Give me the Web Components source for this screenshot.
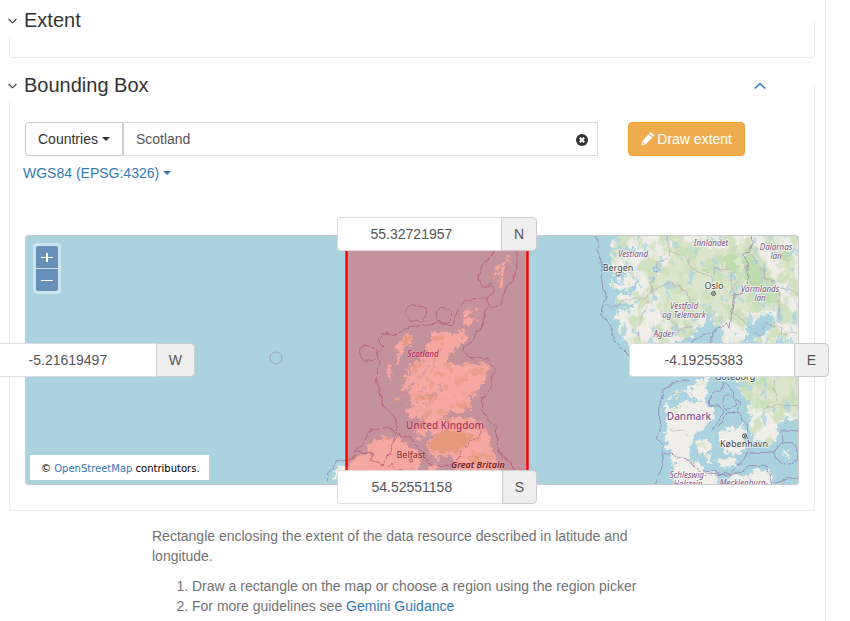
<!DOCTYPE html>
<html lang="en">
<head>
<meta charset="utf-8">
<title>Extent editor</title>
<style>
body { margin: 0; background: #fff; color: #333; font: 14px/20px "Liberation Sans", Arial, sans-serif; }
</style>
</head>
<body>
<extent-editor></extent-editor>

<template id="t-editor">
<style>
:host { display: block; box-sizing: border-box; min-height: 100vh; margin-right: 24px; padding: 21px 10px 0 9px; border-right: 1px solid #eee; }
.row { display: flex; gap: 30px; padding: 20px 54px 0 0; }
region-picker { flex: 1; }
.draw { display: flex; align-items: center; gap: 3px; height: 34px; padding: 0 12px; border: 1px solid #eea236; border-radius: 4px; background: #f0ad4e; color: #fff; font: inherit; }
.crs { display: flex; align-items: center; gap: 4px; margin: 7px 0 0 -2px; padding: 0; border: 0; background: none; color: #337ab7; font: inherit; }
.crs::after { content: ""; border: 4px solid transparent; border-top-color: currentColor; border-bottom: 0; }
extent-map { margin-top: 52px; }
.help { margin: 15px 165px 0 143px; color: #737373; }
p { margin: 0 0 10px; }
ol { margin: 0; padding-left: 40px; }
a { color: #337ab7; text-decoration: none; }
</style>
<form-section heading="Extent"></form-section>
<form-section heading="Bounding Box" collapsible>
  <div class="row">
    <region-picker></region-picker>
    <button class="draw" type="button">
      <svg width="13" height="14" viewBox="0 0 13 14" fill="currentColor" aria-hidden="true"><path d="M7.6 2.2 11.2 5.8 4.4 12.5 0.3 13.4l.9-4.2zM1.9 10.5l-.4 1.8 1.7-.4.2-.9-.6-.6z" fill-rule="evenodd"/><path d="M8.3 1.5 9.1.7q.8-.7 1.6 0l2 2q.7.8 0 1.600l-.8.8z"/></svg>
      Draw extent
    </button>
  </div>
  <button class="crs" type="button">WGS84 (EPSG:4326)</button>
  <extent-map></extent-map>
</form-section>
<div class="help">
  <p>Rectangle enclosing the extent of the data resource described in latitude and longitude.</p>
  <ol>
    <li>Draw a rectangle on the map or choose a region using the region picker</li>
    <li>For more guidelines see <a href="#guidance">Gemini Guidance</a></li>
  </ol>
</div>
</template>

<template id="t-section">
<style>
:host { display: flow-root; box-sizing: border-box; margin-bottom: 28px; padding: 0 15px 20px; border: 1px solid #eee; border-top: 0; border-radius: 0 0 4px 4px; }
:host([collapsible]) { margin-bottom: 0; padding-bottom: 25px; }
header { display: flex; align-items: center; height: 32px; margin: -16px 0 0 -18px; background: #fff; position: relative; }
h2 { flex: 1; margin: 0; padding-bottom: 2px; font-size: 20px; line-height: 30px; font-weight: 400; color: #333; }
button { display: flex; margin: 0; padding: 0; border: 0; background: none; color: #333; }
.fold { width: 17px; padding-left: 1px; }
.up { display: none; margin-right: 33px; color: #337ab7; }
:host([collapsible]) .up { display: flex; }
svg { fill: none; stroke: currentColor; }
</style>
<header>
  <button class="fold" type="button" aria-label="Toggle section"><svg width="9" height="8" viewBox="0 0 9 8" stroke-width="1.1"><path d="M.6 2 4.5 5.8 8.4 2"/></svg></button>
  <h2></h2>
  <button class="up" type="button" aria-label="Collapse"><svg width="12" height="10" viewBox="0 0 12 10" stroke-width="1.5"><path d="M.9 7.500 6 2.500 11.100 7.500"/></svg></button>
</header>
<slot></slot>
</template>

<template id="t-picker">
<style>
:host { display: flex; height: 34px; position: relative; }
button { font: inherit; color: #333; }
.kind { display: flex; align-items: center; gap: 4px; padding: 0 12px; border: 1px solid #ccc; border-radius: 4px 0 0 4px; background: #fff; }
.kind::after { content: ""; border: 4px solid transparent; border-top-color: currentColor; border-bottom: 0; }
input { flex: 1; min-width: 0; box-sizing: border-box; border: 1px solid #ddd; border-left-color: #ccc; padding: 0 36px 0 12px; font: inherit; color: #555; outline: 0; }
.clear { position: absolute; right: 10px; top: 12px; display: flex; padding: 0; border: 0; background: none; }
</style>
<button class="kind" type="button">Countries</button>
<input type="text" value="Scotland" aria-label="Region">
<button class="clear" type="button" aria-label="Clear"><svg width="12" height="12" viewBox="0 0 12 12"><circle cx="6" cy="6" r="6" fill="#333"/><path d="M3.8 3.8 8.2 8.2M8.2 3.8 3.8 8.2" stroke="#fff" stroke-width="2"/></svg></button>
</template>

<template id="t-coord">
<style>
:host { display: flex; box-sizing: border-box; width: 200px; height: 34px; }
input { flex: 1; min-width: 0; box-sizing: border-box; margin: 0; padding: 0 28px 0 12px; border: 1px solid #ddd; border-right: 0; border-radius: 4px 0 0 4px; background: #fff; color: #555; font: inherit; text-align: center; }
label { display: flex; align-items: center; padding: 0 12px; border: 1px solid #ccc; border-radius: 0 4px 4px 0; background: #eee; color: #555; }
</style>
<input id="v" type="text"><label for="v"></label>
</template>

<template id="t-map">
<style>
:host { display: block; position: relative; height: 250px; }
.view { box-sizing: border-box; height: 100%; border-radius: 4px; overflow: hidden; background: #abd2df; }
.view > svg { display: block; width: 100%; height: 100%; }
filter { color-interpolation-filters: sRGB; }
.frame { position: absolute; inset: 0; border: 1px solid #ccc; border-radius: 4px; pointer-events: none; }
.zoom { position: absolute; left: 8px; top: 8px; display: grid; gap: 1px; padding: 3px; border-radius: 4px; background: rgba(255,255,255,.4); }
.zoom button { width: 22px; height: 22px; padding: 5px; border: 0; background: #668fba; display: flex; }
.zoom button:first-child { border-radius: 2px 2px 0 0; }
.zoom button:last-child { border-radius: 0 0 2px 2px; }
.credit { position: absolute; left: 5px; bottom: 5px; height: 25px; box-sizing: border-box; padding: 0 9px 0 11px; background: #fff; color: #000; font: 10px/27px "DejaVu Sans", Verdana, sans-serif; }
.credit a { color: #337ab7; text-decoration: none; }
coord-field { position: absolute; }
.n { top: -18px; left: calc(50% - 75px); }
.s { bottom: -19px; left: calc(50% - 75px); }
.w { top: 108px; left: -30px; }
.e { top: 108px; right: -30px; }
text { font-family: "Noto Sans", sans-serif; text-anchor: middle; paint-order: stroke; stroke: rgba(255,255,255,.6); stroke-width: 2px; stroke-linejoin: round; }
.reg { font-size: 8px; font-style: italic; fill: #7f5486; }
.cty { font-size: 9px; fill: #444; }
.cap { font-size: 9px; fill: #444; }
.nat { font-size: 10px; font-weight: 500; fill: #84508a; }
.over { stroke: rgba(255,255,255,.25); }
.sea { fill: none; stroke: #8d78aa; stroke-width: 3; stroke-linejoin: round; opacity: .75; }
.adm { fill: none; stroke: #a184ab; stroke-width: 2; opacity: .65; }
</style>
<div class="view">
<svg viewBox="25 235 774 250" preserveAspectRatio="xMidYMid slice" role="img" aria-label="Map of Scotland and southern Scandinavia">
<defs>
  <filter id="rough" x="-5%" y="-5%" width="110%" height="110%"><feTurbulence type="fractalNoise" baseFrequency=".06" numOctaves="4" seed="4"/><feDisplacementMap in="SourceGraphic" scale="40" xChannelSelector="R" yChannelSelector="G"/></filter>
  <filter id="wob" x="-5%" y="-5%" width="110%" height="110%"><feTurbulence type="fractalNoise" baseFrequency=".035" numOctaves="2" seed="9"/><feDisplacementMap in="SourceGraphic" scale="22" xChannelSelector="R" yChannelSelector="G"/></filter>
  <filter id="woods" x="0" y="0" width="100%" height="100%"><feTurbulence type="fractalNoise" baseFrequency=".025 .02" numOctaves="5" seed="12"/><feColorMatrix values="0 0 0 0 .79  0 0 0 0 .87  0 0 0 0 .72  6 0 0 0 -2.7"/><feComposite in2="SourceGraphic" operator="in"/></filter>
  <filter id="lakes" x="0" y="0" width="100%" height="100%"><feTurbulence type="fractalNoise" baseFrequency=".045 .03" numOctaves="4" seed="31"/><feColorMatrix values="0 0 0 0 .68  0 0 0 0 .83  0 0 0 0 .88  12 0 0 0 -7.5"/><feComposite in2="SourceGraphic" operator="in"/></filter>
  <filter id="moor" x="0" y="0" width="100%" height="100%"><feTurbulence type="fractalNoise" baseFrequency=".04" numOctaves="4" seed="5"/><feColorMatrix values="0 0 0 0 .85  0 0 0 0 .86  0 0 0 0 .68  10 0 0 0 -5.6"/><feComposite in2="SourceGraphic" operator="in"/></filter>
  <path id="scan" d="M75 20 62 60 66 95 58 125 72 150 62 180 80 200 75 225 88 250 77 280 97 292 90 320 105 345 130 375 210 380 260 352 300 335 330 310 345 290 354 236 363 236 370 290 390 310 395 352 410 420 440 460 450 480 455 510 478 525 475 560 490 575 475 585 480 615 495 645 530 663 560 645 558 610 570 585 670 585 670 0 75 0z"/>
  <path id="alba" d="M335 362 350 370 365 362 385 372 400 372 440 362 438 385 425 405 400 425 385 445 378 458 410 465 450 458 495 458 505 470 500 495 485 525 465 550 450 570 457 590 425 605 400 610 370 618 350 625 420 622 455 625 485 635 505 670 515 710 530 750 540 790 400 790 405 750 380 735 350 750 325 722 320 700 340 680 330 655 310 685 295 680 292 655 300 630 270 620 275 590 265 550 283 520 255 510 280 490 265 470 290 460 325 430 315 420 330 390z"/>
</defs>
<g transform="translate(590 225) scale(.33333)">
  <g filter="url(#rough)"><use href="#scan" fill="#f0eee8"/></g>
  <g filter="url(#rough)" fill="#cfe2bd" opacity=".6">
    <path d="M245 30 320 60 400 70 480 40 520 100 570 210 560 260 440 260 400 290 380 270 330 270 290 305 215 290 210 210 180 190 235 110z"/><path d="M535 50 605 70 620 190 590 150 540 90zM195 345 200 310 240 320 260 345z"/><path d="M480 420 640 440 640 580 560 560 500 560 455 490z"/>
  </g>
  <g filter="url(#rough)" fill="#bddbac"><path d="M458 85 482 86 505 110 525 155 560 190 565 235 520 230 480 190 462 150z"/><path d="M395 95 440 90 440 150 400 130zM545 75 600 80 600 110 560 105z"/></g>
  <g clip-path="none"><use href="#scan" filter="url(#woods)" opacity=".8"/><use href="#scan" filter="url(#lakes)" opacity=".8"/></g>
  <g fill="#abd2df" filter="url(#rough)">
    <path d="M465 325 475 302 502 292 506 266 546 268 551 298 536 305 531 325 512 330 490 362 465 360zM560 335 580 335 575 360 560 360z"/>
    <path d="M75 65 120 70 165 55 120 82 70 78zM65 150 100 148 130 130 100 160 70 170zM62 190 100 195 140 180 120 210 75 208zM85 240 120 238 150 218 125 250 80 255zM365 75 370 110 395 150 377 110z"/>
    <path d="M438 150 445 200 435 200z"/>
  </g>
  <g fill="none" stroke="#8fc4f5" stroke-width="4"><path d="M190 128q12-4 15 5t-12 6zM132 195l5-20 8-8M150 85l18 15M75 170l15 10"/></g>
  <g class="sea" filter="url(#wob)"><path d="M22 10 25 80 38 160 46 220 35 270 65 305 80 350 120 390M300 355Q330 325 365 322L410 290 420 312 424 265M365 322 366 360M480 20 488 55 478 85 455 88 472 115 470 160 455 205 432 210 425 265"/></g>
  <g class="adm" filter="url(#wob)"><path d="M425 265 460 285 485 320 510 330 530 300 575 305 582 330 640 320M45 240 80 245 130 215 170 220 180 200 205 130 200 110 235 95 235 20M235 80 280 90 320 140 360 155M180 200 240 170 290 200 310 240M175 225 145 300 150 345M205 260 270 310 310 305M340 130 370 160 375 130 420 140 425 205M478 85 510 120 525 155 560 180 605 190 640 220M565 195 570 280 580 320"/></g>
</g>
<g transform="translate(590 340) scale(.33333)">
  <g fill="#f0eee8" filter="url(#rough)">
    <path d="M355 105 352 150 342 180 355 200 372 205 375 230 352 255 340 272 312 285 305 300 300 330 305 355 320 370 345 390 380 405 395 460 225 460 250 432 262 400 250 370 238 345 228 300 225 280 230 240 225 200 235 175 260 155 300 145 320 125z"/>
    <path d="M318 302 350 292 365 315 355 345 330 340zM385 285 415 260 435 265 460 250 468 290 455 310 460 330 430 345 415 335 395 330zM375 365 400 355 435 360 440 375 405 385zM375 460 430 405 480 415 485 395 510 385 545 405 550 460zM580 327 600 340 595 352 578 344zM345 350 358 345 365 365 355 375z"/>
  </g>
  <path fill="#abd2df" filter="url(#rough)" d="M232 185 260 165 290 158 300 175 330 180 340 187 300 188 280 180 265 200 240 205z"/>
  <g fill="#cfe2bd" opacity=".6" filter="url(#rough)"><path d="M250 150 300 150 280 162 250 165zM320 130 350 125 340 145zM320 300 350 315 330 325zM240 210 270 200 250 220z"/></g>
  <g class="sea" filter="url(#wob)"><path d="M300 118 255 125 220 150 210 190 208 260 203 295 218 320 220 370 205 410 190 450M222 340 300 360 330 395 370 390 410 408 450 400 475 380 530 380 550 450M365 280 400 210 385 200 360 195 365 160 400 155 395 120M400 125 430 160 450 190 440 215 415 215 385 260M415 165a20 20 0 1 0 1 0M440 215 470 250 480 330 465 360 420 400 350 400M480 340 555 335 580 300 575 275 640 280M590 305a34 34 0 1 0 1 0M550 430 640 408"/></g>
  <g class="adm" filter="url(#wob)"><path d="M228 270 270 265 300 290M300 150 310 180M520 210 570 190 640 200M550 120 560 180"/></g>
</g>
<g fill="none" stroke="#555" stroke-width="1"><circle cx="713.500" cy="293.500" r="2"/><circle cx="713.500" cy="293.500" r=".5"/><circle cx="744.500" cy="436" r="2"/><circle cx="744.500" cy="436" r=".5"/><circle cx="618" cy="274" r="2" stroke="#888"/></g>
<text class="reg" x="633" y="257">Vestland</text><text class="reg" x="711" y="246">Innlandet</text>
<text class="reg"><tspan x="776" y="250">Dalarnas</tspan><tspan x="776" y="259">län</tspan></text>
<text class="reg"><tspan x="760" y="292">Värmlands</tspan><tspan x="760" y="301">län</tspan></text>
<text class="reg"><tspan x="684" y="309">Vestfold</tspan><tspan x="684" y="318">og Telemark</tspan></text>
<text class="reg" x="664" y="337">Agder</text>
<text class="cty" x="618" y="271">Bergen</text><text class="cap" x="714" y="289">Oslo</text><text class="cty" x="735" y="380">Göteborg</text>
<text class="nat" x="689" y="420">Danmark</text><text class="cap" x="744" y="447">København</text>
<text class="reg"><tspan x="688" y="478">Schleswig-</tspan><tspan x="688" y="487">Holstein</tspan></text>
<text class="reg" x="744" y="486">Mecklenburg-</text>
<circle cx="276" cy="358" r="6" fill="none" stroke="#9fa6c4" stroke-width="1"/>
<g transform="translate(320 210) scale(.33333)">
  <g fill="#f2efe9" filter="url(#rough)">
    <use href="#alba"/>
    <path d="M270 373 274 395 258 412 238 440 225 430 232 405 245 385zM240 435 245 460 225 465zM205 460 213 470 209 505 203 500zM265 475 250 495 262 510 245 530 260 545 275 520zM230 565 250 555 235 575zM260 590 282 600 275 625 262 610zM290 650 283 670 290 680z"/>
    <path d="M435 300 448 310 440 325 455 320 450 345 430 345 428 320zM450 288 460 298 452 304zM465 290 480 300 465 305zM460 315 478 325 465 328z"/>
    <path d="M560 137 570 140 560 160zM550 155 560 165 550 190 545 235 537 232 542 195 525 190 540 185 530 170zM525 190 532 200 525 208z"/>
    <path d="M40 800 48 775 80 768 130 735 152 730 134 715 165 690 205 680 240 685 265 710 290 720 302 755 290 800z"/>
    <path d="M330 768 350 762 350 785 330 785z"/>
  </g>
  <g fill="#d5d49f" filter="url(#rough)" opacity=".75"><path d="M272 375 270 395 250 410 240 395zM325 715 345 680 370 660 400 655 430 670 455 685 430 715 400 725 360 730zM310 560 350 555 355 565 320 575zM225 570 248 558 235 572zM200 682 215 690 195 695zM440 740 475 745 490 760 450 760z"/></g>
  <use href="#alba" filter="url(#moor)" opacity=".6"/>
  <g stroke="#abd2df" fill="none" stroke-width="3" filter="url(#rough)"><path d="M290 610 370 520M300 500 335 470M290 550 320 530M330 600 310 640M350 420 340 470M290 575 350 540"/></g>
  <g class="sea" filter="url(#wob)"><path d="M535 105 505 150Q470 175 478 210T515 225L520 250Q495 260 502 280T530 293T545 265L560 240 590 180 592 130 580 100M502 275Q490 260 450 268Q415 280 410 310L400 345 345 340 270 350 220 377Q190 360 178 380T192 410L170 430 182 460 168 500 175 540 195 590 225 620 235 670 210 650 185 655 140 665 130 700 105 720 100 750 45 760 20 790 20 810M498 290 495 330 470 370 450 400 430 425 440 438 500 445 525 480 510 530 485 570 485 600 505 635 530 650 530 700 545 740 575 760 590 800M235 670 270 685 310 730 330 760 390 770 440 710 480 670 480 640"/><path d="M280 287a22 22 0 0 0 0 44h17a22 22 0 0 0 0-46zM369 293a23 23 0 1 0 1 0M144 406a24 24 0 1 0 1 0"/><path d="M105 720 160 730 150 750 190 765 230 670M205 770Q220 760 225 780L265 785 275 775"/></g>
</g>
<text class="reg over" x="423" y="357" style="font-weight:500;fill:#8d4a86">Scotland</text>
<text class="nat over" x="445" y="429">United Kingdom</text>
<text class="cty over" x="411" y="458">Belfast</text>
<text class="cty over" x="478" y="468" style="font-style:italic;font-weight:600;fill:#333">Great Britain</text>
<circle cx="411" cy="460.500" r="1.500" fill="none" stroke="#777"/>
<rect x="346.500" y="220" width="181" height="290" fill="red" fill-opacity=".3" stroke="red" stroke-width="2.400"/>
</svg>
</div>
<div class="frame"></div>
<div class="zoom">
  <button type="button" aria-label="Zoom in"><svg width="12" height="12" viewBox="0 0 12 12"><path d="M0 6.500H12" stroke="#fff"/><path d="M6 2V11" stroke="#fff" stroke-width="2"/></svg></button>
  <button type="button" aria-label="Zoom out"><svg width="12" height="12" viewBox="0 0 12 12"><path d="M0 6.500H12" stroke="#fff"/></svg></button>
</div>
<div class="credit">© <a href="#osm">OpenStreetMap</a> contributors.</div>
<coord-field class="n" side="N" value="55.32721957"></coord-field>
<coord-field class="w" side="W" value="-5.21619497"></coord-field>
<coord-field class="e" side="E" value="-4.19255383"></coord-field>
<coord-field class="s" side="S" value="54.52551158"></coord-field>
</template>

<script>
class TemplateElement extends HTMLElement {
  connectedCallback() {
    if (this.shadowRoot) return;
    this.attachShadow({ mode: "open" }).append(document.getElementById(this.constructor.template).content.cloneNode(true));
    this.ready();
  }
  ready() {}
}
customElements.define("coord-field", class extends TemplateElement {
  static template = "t-coord";
  ready() {
    this.shadowRoot.querySelector("input").value = this.getAttribute("value");
    this.shadowRoot.querySelector("label").textContent = this.getAttribute("side");
  }
});
customElements.define("extent-map", class extends TemplateElement { static template = "t-map"; });
customElements.define("region-picker", class extends TemplateElement { static template = "t-picker"; });
customElements.define("form-section", class extends TemplateElement {
  static template = "t-section";
  ready() { this.shadowRoot.querySelector("h2").textContent = this.getAttribute("heading"); }
});
customElements.define("extent-editor", class extends TemplateElement { static template = "t-editor"; });
</script>
</body>
</html>
